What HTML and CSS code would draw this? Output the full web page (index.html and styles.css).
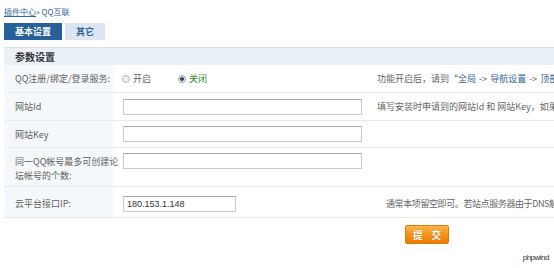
FILE: index.html
```html
<!DOCTYPE html>
<html lang="zh-CN">
<head>
<meta charset="utf-8">
<title>QQ互联</title>
<link rel="stylesheet" href="styles.css">
</head>
<body>
<div class="crumb"><a href="#">插件中心</a>» QQ互联</div>
<div class="tabs"><a class="tab tab-active" href="#">基本设置</a><a class="tab" href="#">其它</a></div>
<form class="form">
  <div class="panel-head">参数设置</div>
  <div class="row row-1">
    <div class="cell label">QQ注册/绑定/登录服务:</div>
    <div class="cell field">
      <label class="radio"><input type="radio" name="svc">开启</label>
      <label class="radio radio-on"><input type="radio" name="svc" checked>关闭</label>
    </div>
    <div class="cell hint">功能开启后，请到“<span class="hl">全局</span><span class="arrow">-&gt;</span><span class="hl">导航设置</span><span class="arrow">-&gt;</span><span class="hl">顶部导航</span>”中添加QQ登录入口</div>
  </div>
  <div class="row row-2">
    <div class="cell label">网站Id</div>
    <div class="cell field"><input class="text" type="text"></div>
    <div class="cell hint">填写安装时申请到的网站Id 和 网站Key，如果还没有申请，请前往QQ互联申请</div>
  </div>
  <div class="row row-3">
    <div class="cell label">网站Key</div>
    <div class="cell field"><input class="text" type="text"></div>
    <div class="cell hint"></div>
  </div>
  <div class="row row-4">
    <div class="cell label">同一QQ帐号最多可创建论<br>坛帐号的个数:</div>
    <div class="cell field"><input class="text" type="text"></div>
    <div class="cell hint"></div>
  </div>
  <div class="row row-5">
    <div class="cell label">云平台接口IP:</div>
    <div class="cell field"><input class="text text-short" type="text" value="180.153.1.148"></div>
    <div class="cell hint hint-pad">通常本项留空即可。若站点服务器由于DNS解析问题无法连接云平台，请填写此IP</div>
  </div>
  <div class="actions"><button class="btn" type="button">提 交</button></div>
</form>
<div class="footer">phpwind</div>
</body>
</html>
```

FILE: styles.css
```css
* { box-sizing: border-box; }
html { overflow: hidden; }
body {
  margin: 0;
  padding: 0 4px;
  font-family: "Noto Sans CJK SC", "Liberation Sans", sans-serif;
  font-size: 9px;
  color: #666;
  background: #fff;
}
a { color: #336699; }

.crumb {
  margin-top: 6px;
  height: 12px;
  line-height: 12px;
  font-size: 8px;
  color: #336699;
}
.crumb a { text-decoration: underline; }

.tabs { display: flex; gap: 3px; margin-top: 5px; }
.tab {
  display: block;
  height: 17px;
  line-height: 17px;
  padding: 0 11px;
  background: #dbe6f2;
  color: #336699;
  font-weight: bold;
  font-size: 9px;
  text-decoration: none;
}
.tab-active { background: #266199; color: #fff; }

.form { display: block; width: 846px; margin: 7px 0 0; }

.panel-head {
  border-top: 1px solid #d9e0e7;
  background: #e9f0f8;
  height: 18px;
  line-height: 17px;
  padding-left: 11px;
  font-size: 10px;
  font-weight: bold;
  color: #333;
}

.row {
  display: grid;
  grid-template-columns: 109px 263px 1fr;
  border-bottom: 1px solid #e6ebf0;
}
.row-1 { height: 28px; }
.row-2 { height: 28px; }
.row-3 { height: 27px; }
.row-4 { height: 39px; }
.row-5 { height: 31px; }

.cell { display: flex; align-items: center; }
.label { background: #f5f8fb; padding-left: 11px; white-space: nowrap; color: #5f5f5f; }
.field { padding-left: 10px; }
.hint { padding-left: 1px; white-space: nowrap; color: #666; font-size: 9px; }
.hint-pad { padding-left: 10px; letter-spacing: -0.4px; }
.hl { color: #336699; }
.arrow { padding: 0 3px; }

.row-4 .cell { align-items: flex-start; }
.row-4 .label { padding-top: 7px; line-height: 14px; }
.row-4 .field { padding-top: 5px; }
.row-5 .cell { padding-top: 3px; }

.radio { display: inline-flex; align-items: center; margin-right: 28px; }
.radio-on { color: #2f8a2f; }
.radio input {
  appearance: none;
  -webkit-appearance: none;
  width: 8px;
  height: 8px;
  margin: 0 3px 0 -1px;
  border: 1px solid #b9b9b9;
  border-radius: 50%;
  background: #eee;
}
.radio input:checked {
  background: radial-gradient(circle, #2b4f7a 0 1.6px, #e8e8e8 2.2px);
  border-color: #9aa5b1;
}

.text {
  height: 16px;
  width: 239px;
  margin: 0;
  border: 1px solid #cacaca;
  border-top-color: #a9a9a9;
  padding: 0 3px;
  font: 9px "Liberation Sans", Arial, sans-serif;
  color: #333;
  background: #fff;
}
.text-short { width: 113px; }

.actions { margin-top: 7px; text-align: center; }
.btn {
  width: 44px;
  height: 19px;
  padding: 0;
  border: 1px solid #dc7a0c;
  border-radius: 2px;
  background: linear-gradient(#fcb548, #f39017 55%, #e97c00);
  color: #fff;
  font-family: "Noto Sans CJK SC", sans-serif;
  font-weight: bold;
  font-size: 10px;
  letter-spacing: 3px;
  text-indent: 3px;
  text-shadow: 0 0 1px #c86a00;
}

.footer {
  margin-top: 9px;
  height: 10px;
  line-height: 10px;
  text-align: right;
  padding-right: 1px;
  font: 8px "Liberation Sans", Arial, sans-serif;
  letter-spacing: -0.5px;
  color: #333;
}
```
